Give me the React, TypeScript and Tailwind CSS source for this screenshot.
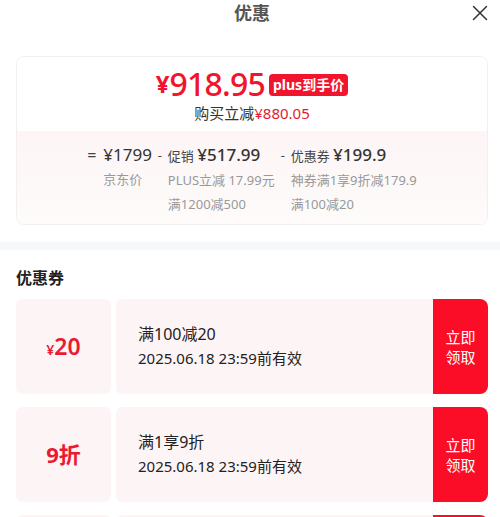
const coupons = [
  { kind: 'cash', value: '20', title: '满100减20', expire: '2025.06.18 23:59前有效' },
  { kind: 'discount', value: '9折', title: '满1享9折', expire: '2025.06.18 23:59前有效' },
  { kind: 'cash', value: '10', title: '满99减10', expire: '2025.06.18 23:59前有效' },
];

export default function App() {
  return (
    <div className="min-h-[517px] bg-white text-[#1a1a1a] [font-family:'Noto_Sans','Noto_Sans_CJK_SC',sans-serif]">
      <div className="pl-4 pr-3">
        {/* Header */}
        <div className="relative flex h-[26px] items-center justify-center">
          <h1 className="text-[18px] leading-[26px] font-bold text-[#555]">优惠</h1>
          <button className="absolute right-0 top-[5px]">
            <svg width="16" height="16" viewBox="0 0 16 16" fill="none" stroke="#333" strokeWidth="1.5" strokeLinecap="round">
              <path d="M1.5 1.5 L14.5 14.5 M14.5 1.5 L1.5 14.5" />
            </svg>
          </button>
        </div>

        {/* Price summary card */}
        <section className="mt-[30px] overflow-hidden rounded-lg border border-[#f0f0f0]">
          <div className="flex h-[74px] flex-col items-center bg-white pt-[9px]">
            <div className="flex h-[36px] items-center">
              <span className="text-[24px] leading-[30px] font-bold text-[#f0142c]">¥</span>
              <span className="text-[32px] leading-[36px] font-medium tracking-tight text-[#f0142c]">918.95</span>
              <span className="ml-1 mt-[2px] h-[22px] rounded-sm bg-[#f0142c] px-1 text-[14px] leading-[22px] font-bold text-white">
                plus到手价
              </span>
            </div>
            <div className="h-[22px] text-[15px] leading-[22px] text-[#333]">
              购买立减<span className="text-[#e4192f]">¥880.05</span>
            </div>
          </div>

          <div className="flex justify-center gap-[6px] bg-gradient-to-b from-[#fdf5f5] to-[#fefbfb] pt-[12px] pb-[8px] text-[13px] leading-[24px]">
            <div className="flex">
              <span className="w-4 text-[16px] text-[#444]">=</span>
              <div className="flex flex-col">
                <span className="text-[17px] text-[#333]">¥1799</span>
                <span className="text-[#999]">京东价</span>
              </div>
            </div>
            <div className="flex">
              <span className="w-[10px] text-[#444]">-</span>
              <div className="flex flex-col">
                <span className="text-[#444]">
                  促销 <span className="text-[17px] font-medium text-[#333]">¥517.99</span>
                </span>
                <span className="text-[#999]">PLUS立减 17.99元</span>
                <span className="text-[#999]">满1200减500</span>
              </div>
            </div>
            <div className="flex">
              <span className="w-[10px] text-[#444]">-</span>
              <div className="flex flex-col">
                <span className="text-[#444]">
                  优惠券 <span className="text-[17px] font-medium text-[#333]">¥199.9</span>
                </span>
                <span className="text-[#999]">神券满1享9折减179.9</span>
                <span className="text-[#999]">满100减20</span>
              </div>
            </div>
          </div>
        </section>
      </div>

      <div className="mt-[17px] h-2 bg-[#f6f7fa]" />

      {/* Coupons */}
      <div className="pl-4 pr-3">
        <h2 className="mt-4 text-[16px] leading-[24px] font-bold text-[#222]">优惠券</h2>
        <div className="mt-[9px] flex flex-col gap-[13px]">
          {coupons.map((c) => (
            <div key={c.title} className="flex h-[95px]">
              <div className="flex w-[95px] items-center justify-center rounded-md bg-[#fdf4f5] text-[#ec1a30]">
                {c.kind === 'cash' ? (
                  <span className="flex items-baseline font-semibold">
                    <span className="text-[14px]">¥</span>
                    <span className="text-[23px]">{c.value}</span>
                  </span>
                ) : (
                  <span className="text-[22px] font-bold">{c.value}</span>
                )}
              </div>
              <div className="ml-[5px] flex flex-1 flex-col justify-center rounded-l-md bg-[#fdf4f5] pl-[22px] pb-[2px]">
                <span className="text-[16px] leading-[24px] text-[#222]">{c.title}</span>
                <span className="text-[15px] leading-[24px] text-[#222]">{c.expire}</span>
              </div>
              <button className="flex w-[55px] flex-col items-center justify-center rounded-r-lg bg-[#fb0d28] text-[15px] leading-[20px] text-white">
                <span>立即</span>
                <span>领取</span>
              </button>
            </div>
          ))}
        </div>
      </div>
    </div>
  );
}
